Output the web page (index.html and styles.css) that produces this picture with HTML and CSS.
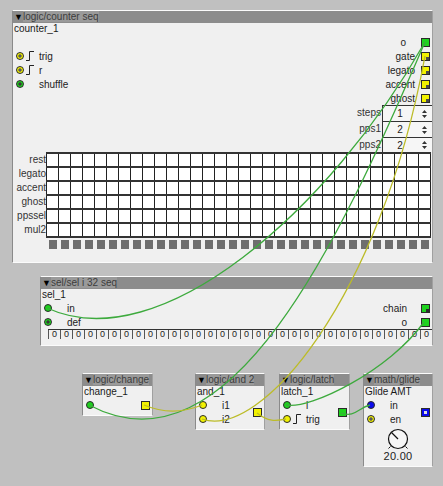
FILE: index.html
```html
<!DOCTYPE html>
<html>
<head>
<meta charset="utf-8">
<title>patch</title>
<link rel="stylesheet" href="styles.css">
</head>
<body>
<div class="canvas">

  <div class="obj counter">
    <div class="title"><span class="tri">▼</span><span class="tt">logic/counter seq</span></div>
    <div class="name">counter_1</div>
    <div class="io top">
      <div class="col ins">
        <div class="row"></div>
        <div class="row"><span class="jack y ring"></span><svg class="edge" viewBox="0 0 8 10"><path d="M0 9.5H3.5V0.5H8" fill="none" stroke="#222" stroke-width="1"/></svg><span class="lbl">trig</span></div>
        <div class="row"><span class="jack y ring"></span><svg class="edge" viewBox="0 0 8 10"><path d="M0 9.5H3.5V0.5H8" fill="none" stroke="#222" stroke-width="1"/></svg><span class="lbl">r</span></div>
        <div class="row"><span class="jack g ring"></span><span class="slot"></span><span class="lbl">shuffle</span></div>
      </div>
      <div class="col outs">
        <div class="row"><span class="lbl wide">o</span><span class="port g"></span></div>
        <div class="row"><span class="lbl">gate</span><span class="port y open"></span></div>
        <div class="row"><span class="lbl">legato</span><span class="port y open"></span></div>
        <div class="row"><span class="lbl">accent</span><span class="port y open"></span></div>
        <div class="row"><span class="lbl">ghost</span><span class="port y open"></span></div>
      </div>
    </div>
    <div class="params">
      <div class="prow"><span class="plbl">steps</span><div class="spin"><span class="val">1</span><svg class="arr" viewBox="0 0 7 12"><path d="M3.5 2L6 5H1Z M1 7H6L3.5 10Z" fill="#333"/></svg></div></div>
      <div class="prow"><span class="plbl">pps1</span><div class="spin"><span class="val">2</span><svg class="arr" viewBox="0 0 7 12"><path d="M3.5 2L6 5H1Z M1 7H6L3.5 10Z" fill="#333"/></svg></div></div>
      <div class="prow last"><span class="plbl">pps2</span><div class="spin"><span class="val">2</span><svg class="arr" viewBox="0 0 7 12"><path d="M3.5 2L6 5H1Z M1 7H6L3.5 10Z" fill="#333"/></svg></div></div>
    </div>
    <div class="seq">
      <div class="rlabels">
        <div>rest</div><div>legato</div><div>accent</div><div>ghost</div><div>ppssel</div><div>mul2</div>
      </div>
      <div class="grid"></div>
    </div>
    <div class="leds"></div>
  </div>

  <div class="obj sel">
    <div class="title"><span class="tri">▼</span><span class="tt">sel/sel i 32 seq</span></div>
    <div class="name">sel_1</div>
    <div class="io top">
      <div class="col ins">
        <div class="row"><span class="jack g"></span><span class="slot"></span><span class="lbl">in</span></div>
        <div class="row"><span class="jack g ring"></span><span class="slot"></span><span class="lbl">def</span></div>
      </div>
      <div class="col outs far">
        <div class="row"><span class="lbl">chain</span><span class="port g open"></span></div>
        <div class="row"><span class="lbl">o</span><span class="port g"></span></div>
      </div>
    </div>
    <div class="zeros"><span>0</span><span>0</span><span>0</span><span>0</span><span>0</span><span>0</span><span>0</span><span>0</span><span>0</span><span>0</span><span>0</span><span>0</span><span>0</span><span>0</span><span>0</span><span>0</span><span>0</span><span>0</span><span>0</span><span>0</span><span>0</span><span>0</span><span>0</span><span>0</span><span>0</span><span>0</span><span>0</span><span>0</span><span>0</span><span>0</span><span>0</span><span>0</span></div>
  </div>

  <div class="obj change">
    <div class="title"><span class="tri">▼</span><span class="tt">logic/change</span></div>
    <div class="name">change_1</div>
    <div class="io">
      <div class="col ins">
        <div class="row"><span class="jack g"></span></div>
      </div>
      <div class="col outs">
        <div class="row"><span class="port y"></span></div>
      </div>
    </div>
  </div>

  <div class="obj and">
    <div class="title"><span class="tri">▼</span><span class="tt">logic/and 2</span></div>
    <div class="name">and_1</div>
    <div class="io">
      <div class="col ins">
        <div class="row"><span class="jack y"></span><span class="slot"></span><span class="lbl">i1</span></div>
        <div class="row"><span class="jack y"></span><span class="slot"></span><span class="lbl">i2</span></div>
      </div>
      <div class="col outs">
        <div class="row"><span class="port y"></span></div>
      </div>
    </div>
  </div>

  <div class="obj latch">
    <div class="title"><span class="tri">▼</span><span class="tt">logic/latch</span></div>
    <div class="name">latch_1</div>
    <div class="io">
      <div class="col ins">
        <div class="row"><span class="jack g"></span><span class="slot"></span><span class="lbl">i</span></div>
        <div class="row"><span class="jack y"></span><svg class="edge" viewBox="0 0 8 10"><path d="M0 9.5H3.5V0.5H8" fill="none" stroke="#222" stroke-width="1"/></svg><span class="lbl">trig</span></div>
      </div>
      <div class="col outs">
        <div class="row"><span class="port g"></span></div>
      </div>
    </div>
  </div>

  <div class="obj glide">
    <div class="title"><span class="tri">▼</span><span class="tt">math/glide</span></div>
    <div class="name">Glide AMT</div>
    <div class="io">
      <div class="col ins">
        <div class="row"><span class="jack b"></span><span class="slot"></span><span class="lbl">in</span></div>
        <div class="row"><span class="jack y ring"></span><span class="slot"></span><span class="lbl">en</span></div>
      </div>
      <div class="col outs">
        <div class="row"><span class="port b open"></span></div>
      </div>
    </div>
    <div class="knob">
      <svg viewBox="0 0 24 24" class="dial"><circle cx="12" cy="12" r="9.5" fill="#f6f6f6" stroke="#111" stroke-width="1.2"/><path d="M12 12L5.5 5.5" stroke="#111" stroke-width="1.2"/><path d="M4.5 19.5L2.5 21.5M19.5 19.5L21.5 21.5" stroke="#111" stroke-width="1"/></svg>
      <div class="kval">20.00</div>
    </div>
  </div>

  <svg class="wires" viewBox="0 0 443 486">
    <g fill="none" stroke-width="1.3">
      <path d="M47 308C160 360 330 210 425 42" stroke="#3daa3d"/>
      <path d="M89 405C230 480 340 240 425 42" stroke="#3daa3d"/>
      <path d="M286 405C310 410 390 370 424 322" stroke="#3daa3d"/>
      <path d="M341 413C355 418 358 408 370 405" stroke="#3daa3d"/>
      <path d="M202 419C260 440 380 300 425 56" stroke="#bcbc28"/>
      <path d="M144 405C165 414 185 412 202 405" stroke="#bcbc28"/>
      <path d="M257 413C268 422 276 421 286 419" stroke="#bcbc28"/>
    </g>
  </svg>
</div>
</body>
</html>
```

FILE: styles.css
```css
* { box-sizing: border-box; }
html, body { margin: 0; padding: 0; }
body {
  background: #c0c0c0;
  font-family: "Liberation Sans", Arial, sans-serif;
  font-size: 10px;
  color: #222;
}
.canvas {
  position: relative;
  width: 443px;
  height: 486px;
  overflow: hidden;
}

/* objects on the patch canvas */
.obj {
  position: absolute;
  background: #f0f0f0;
  border: 1px solid;
  border-color: #fbfbfb #a0a0a0 #fbfbfb #8a8a8a;
  overflow: hidden;
}
.counter { left: 12px; top: 10px; width: 421px; height: 253px; }
.sel     { left: 40px; top: 276px; width: 393px; height: 70px; }
.change  { left: 82px; top: 373px; width: 71px; height: 43px; }
.and     { left: 195px; top: 373px; width: 70px; height: 57px; }
.latch   { left: 279px; top: 373px; width: 71px; height: 57px; }
.glide   { left: 363px; top: 373px; width: 70px; height: 94px; }

.title {
  height: 12px;
  line-height: 12px;
  background: #8c8c8c;
  white-space: nowrap;
  overflow: hidden;
  color: #3c3c3c;
  padding-left: 1px;
}
.tri { color: #000; font-size: 9px; }
.tt { background: #9a9a9a; }
.name {
  height: 12px;
  line-height: 12px;
  padding-left: 1px;
  white-space: nowrap;
  color: #1a1a1a;
}

.io {
  display: flex;
  justify-content: space-between;
  align-items: center;
}
.io.top { align-items: flex-start; }
.col { display: flex; flex-direction: column; }
.row {
  height: 14px;
  display: flex;
  align-items: center;
  white-space: nowrap;
}
.ins .row { padding-left: 3px; }
.outs .row { justify-content: flex-end; padding-right: 2px; }

.jack {
  width: 8px;
  height: 8px;
  border-radius: 50%;
  border: 1px solid #2a2a2a;
  flex: none;
}
.jack.y { background: #f2f200; }
.jack.g { background: #1ed21e; }
.jack.b { background: #0a0aee; }
.jack.y.ring { background: radial-gradient(circle, #5a5a5a 0 1.4px, #f2f200 1.9px); }
.jack.g.ring { background: radial-gradient(circle, #3a3a3a 0 1.4px, #1ed21e 1.9px); }

.edge { width: 8px; height: 10px; margin-left: 2px; flex: none; }
.slot { width: 8px; margin-left: 2px; flex: none; }
.ins .lbl { margin-left: 5px; }

.port {
  width: 9px;
  height: 9px;
  border: 1px solid #2a2a2a;
  margin-left: 6px;
  flex: none;
}
.port.y { background: #f2f200; }
.port.g { background: #1ed21e; }
.port.b { background: #0a0aee; }
.port.y.open { background: linear-gradient(#4a4a4a, #4a4a4a) 4px 4px / 3px 3px no-repeat, #f2f200; }
.port.g.open { background: linear-gradient(#2a2a2a, #2a2a2a) 4px 4px / 3px 3px no-repeat, #1ed21e; }
.port.b.open { background: linear-gradient(#ddd, #ddd) 2px 2px / 3px 3px no-repeat, #0a0aee; }
.lbl.wide { margin-right: 9px; }
.far .port { margin-left: 14px; }

/* parameters */
.params { display: flex; flex-direction: column; }
.prow {
  display: flex;
  justify-content: flex-end;
  height: 16px;
}
.prow.last { height: 15px; }
.plbl { line-height: 16px; padding-right: 1px; color: #333; }
.spin {
  width: 50px;
  display: flex;
  align-items: center;
  border: 1px solid #333;
  border-bottom: none;
  border-right: none;
  background: #f6f6f6;
}
.val { width: 34px; text-align: center; }
.arr { width: 7px; height: 12px; margin-left: 4px; }

/* step grid */
.seq { display: flex; }
.rlabels { width: 33px; padding-top: 1px; }
.rlabels div { height: 14px; line-height: 14px; text-align: right; color: #333; }
.grid {
  width: 385px;
  height: 86px;
  background-color: #fff;
  background-image:
    repeating-linear-gradient(to bottom, #333 0 2px, transparent 2px 14px),
    repeating-linear-gradient(to right, #222 0 1px, transparent 1px 12px);
}
.leds {
  margin: 2px 0 0 33px;
  width: 384px;
  height: 9px;
  background: repeating-linear-gradient(to right, transparent 0 3px, #6e6e6e 3px 11px, transparent 11px 12px);
}

/* sel row of values */
.zeros {
  display: flex;
  margin-left: 7px;
  width: 384px;
  height: 10px;
  border-top: 1px solid #333;
}
.zeros span {
  width: 12px;
  border-left: 1px solid #555;
  text-align: center;
  font-size: 9px;
  line-height: 9px;
}

/* knob */
.knob { display: flex; flex-direction: column; align-items: center; padding-top: 1px; }
.dial { width: 24px; height: 24px; }
.kval { font-size: 11px; line-height: 11px; letter-spacing: 0.3px; }

.wires {
  position: absolute;
  left: 0;
  top: 0;
  width: 443px;
  height: 486px;
  pointer-events: none;
}
```
